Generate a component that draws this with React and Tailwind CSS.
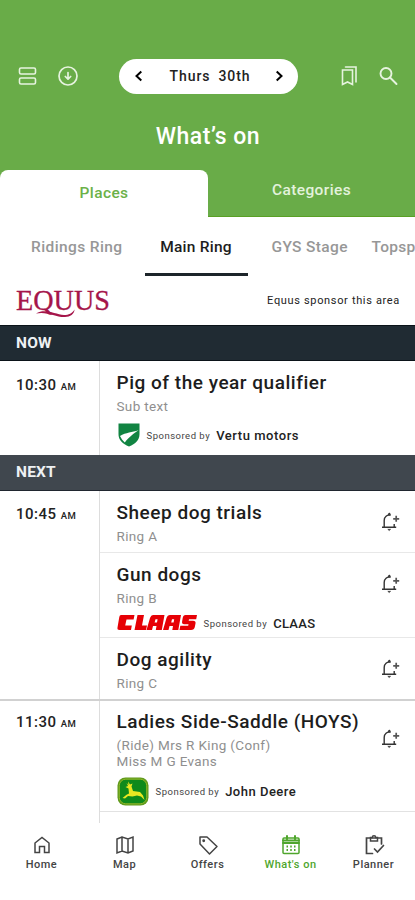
import React from "react";

const stroke = {
  fill: "none",
  stroke: "currentColor",
  strokeWidth: 2,
  strokeLinecap: "round",
  strokeLinejoin: "round",
};

function BellPlus() {
  return (
    <svg className="h-5 w-5 shrink-0 text-[#333]" viewBox="0 0 20 20" {...stroke} strokeWidth="1.4" strokeLinecap="butt">
      <path d="M10.6 3.4C7 2.4 4.2 5 4.2 8.400V15M2 15.300H16.200M14.200 15V12M8.200 2.700L9.300 1.400L10.400 2.700" />
      <path d="M7.800 17.300H10.600L9.200 18.600Z" fill="currentColor" strokeWidth="0.600" />
      <path d="M16.200 3.800V9.800M13.200 6.800H19.200" strokeWidth="1.700" className="text-[#555]" stroke="currentColor" />
    </svg>
  );
}

function ShieldLogo() {
  return (
    <svg className="ml-px h-6 w-[22px]" viewBox="0 0 22 24">
      <path d="M0.500 0.500H21.500V11C21.500 17 17.500 21 11 23.500C4.500 21 0.500 17 0.500 11Z" fill="#118442" />
      <path d="M2 13C8 9.500 14 9.300 20.500 7.300C15.500 10.800 11.500 13.500 6.800 19.500L4 16.500Z" fill="#fff" />
    </svg>
  );
}

function ClaasLogo() {
  return (
    <svg className="h-[15px] w-20" viewBox="0 0 80 15" fill="#e60005">
      <path d="M4 0H17.500L16.600 4.500H9.500L8.200 10.500H14.800L14 15H2.500Q0 15 0.500 12.500L2.300 2Q2.600 0 4 0Z" />
      <path d="M20.500 0H27L25 10.500H30L29 15H17.500Z" />
      <path fillRule="evenodd" d="M36 0H47.500L44.800 15H38.800L39.500 11H36L35 15H29.500L33 3Q34 0 36 0ZM38.500 4.300L37.600 7.500H40L40.600 4.300Z" />
      <path fillRule="evenodd" d="M53 0H64L61.300 15H55.300L56 11H52.500L51.500 15H46L49.500 3Q50.500 0 53 0ZM55 4.300L54.200 7.500H56.600L57.200 4.300Z" />
      <path d="M68.500 0H80L79.200 4.200H72L71.700 5.800H76Q79 5.800 78.500 8.500L77.800 12Q77.200 15 74 15H62.500L63.300 10.800H71.200L71.500 9.200H67.200Q64.600 9.200 65.100 6.500L65.700 3Q66.200 0 68.500 0Z" />
    </svg>
  );
}

function DeerLogo() {
  return (
    <svg className="h-[29px] w-8" viewBox="0 0 32 29">
      <rect x="0.500" y="0.500" width="31" height="28" rx="8" fill="#5f9a1c" />
      <rect x="2.300" y="2.200" width="27.400" height="24.600" rx="6.500" fill="#0f8a1b" stroke="#9dbb2a" strokeWidth="0.900" />
      <path d="M9.500 6L11.500 8L11 4.500L13 7.500L15.500 6.500L14.500 9.500L16 14L23 15L26 18.500L27.500 23L24 19.500L20 18.500L15.500 19.500L11 19L8 21.500L5.500 21L9.500 17.800L12 16.500L11.500 11.500L8.500 10L11 9Z" fill="#e9e722" />
    </svg>
  );
}

function EquusLogo() {
  return (
    <svg className="text-[#a5154a]" width="110" height="36" viewBox="0 0 110 36">
      <text x="0" y="26.500" fontFamily="'Liberation Serif', serif" fontSize="30" fill="currentColor" stroke="currentColor" strokeWidth="0.300" textLength="94" lengthAdjust="spacingAndGlyphs">EQUUS</text>
      <path d="M20 30.500C29 25 39 31.500 48 32C53 32 56 30.500 58.500 26.500C58.500 31 54 34 49 34C40 34.500 31 28 20 30.500Z" fill="currentColor" />
    </svg>
  );
}

function Time({ value, top }) {
  return (
    <div className={"w-[99px] shrink-0 pl-4 text-[15px] leading-[18px] font-medium tracking-[0.5px] text-[#222] " + top}>
      {value} <span className="text-[9.5px] tracking-[0.3px]">AM</span>
    </div>
  );
}

function Sponsor({ logo, name, spacing }) {
  return (
    <div className="flex items-center whitespace-nowrap">
      {logo}
      <span className="ml-[7px] pt-[3px] text-[9.5px] tracking-[0.5px] text-[#444]">Sponsored by</span>
      <span className={"ml-[6px] pt-[2px] text-[13px] font-medium text-[#222] " + spacing}>{name}</span>
    </div>
  );
}

function Event({ title, children, className, bell, bellTop, top = "pt-3" }) {
  return (
    <div className={"flex justify-between pl-[16.5px] pr-[15px] " + className}>
      <div className={"min-w-0 " + top}>
        <h2 className="whitespace-nowrap text-[19px] leading-5 font-medium tracking-[0.52px] text-[#1d1d1d]">{title}</h2>
        {children}
      </div>
      {bell && <div className={bellTop}><BellPlus /></div>}
    </div>
  );
}

function Sub({ children }) {
  return <p className="mt-[5px] text-[13.5px] leading-4 tracking-[0.35px] text-[#8f8f8f]">{children}</p>;
}

function NavItem({ label, active, children }) {
  return (
    <div className={"flex w-[83px] flex-col items-center " + (active ? "text-[#4fa62d]" : "text-[#444]")}>
      <svg className="h-[22px] w-[22px]" viewBox="0 0 22 22" {...stroke} strokeWidth="1.5" strokeLinejoin="miter">{children}</svg>
      <span className="mt-[2px] text-[11px] leading-[13px] font-medium tracking-[0.5px]">{label}</span>
    </div>
  );
}

export default function App() {
  return (
    <div className="flex h-[900px] w-[415px] flex-col overflow-hidden bg-white font-['Roboto',sans-serif]">
      <header className="flex h-[217px] shrink-0 flex-col border-b border-[#5aa025] bg-[#69ac48]">
        <div className="mt-[58px] flex h-[36px] items-center pl-[17px] pr-4 text-[#e6f3df]">
          <svg width="20" height="20" viewBox="0 0 20 20" {...stroke} strokeWidth="1.6">
            <rect x="2.500" y="2" width="16" height="6" rx="1.5" />
            <rect x="2.500" y="12" width="16" height="6" rx="1.5" />
          </svg>
          <svg className="ml-5" width="22" height="22" viewBox="0 0 22 22" {...stroke} strokeWidth="1.7">
            <circle cx="11" cy="11" r="9" />
            <path d="M11 7.500V14M8.300 11.500L11 14.200L13.700 11.500" />
          </svg>
          <div className="ml-10 flex h-[35px] w-[179px] items-center justify-between rounded-full bg-white px-[14px] text-black">
            <svg width="12" height="12" viewBox="0 0 12 12" {...stroke} strokeLinecap="butt" strokeLinejoin="miter"><path d="M8.300 1.500L3.500 6L8.300 10.500" /></svg>
            <span className="ml-[3px] text-[14px] font-medium tracking-[0.95px] [word-spacing:3.5px] text-[#222]">Thurs 30th</span>
            <svg width="12" height="12" viewBox="0 0 12 12" {...stroke} strokeLinecap="butt" strokeLinejoin="miter"><path d="M4.700 1.500L9.500 6L4.700 10.500" /></svg>
          </div>
          <svg className="ml-[41px]" width="22" height="22" viewBox="0 0 22 22" {...stroke} strokeWidth="1.6" strokeLinejoin="miter">
            <path d="M3.500 5H13.500V19.500L8.500 17L3.500 19.500ZM6.500 2H17V17" />
          </svg>
          <svg className="ml-[17px]" width="20" height="20" viewBox="0 0 20 20" {...stroke} strokeWidth="1.9">
            <circle cx="8" cy="7.500" r="5.500" />
            <path d="M12 11.500L18.500 18" />
          </svg>
        </div>
        <h1 className="mt-[29px] pl-px text-center text-[23px] leading-7 font-medium tracking-[0.5px] text-white">What’s on</h1>
        <div className="mt-auto -mb-px flex h-[47px] text-[15.5px] font-medium">
          <div className="flex w-[208px] items-center justify-center rounded-t-lg bg-white tracking-[0.4px] text-[#6bb148]">Places</div>
          <div className="flex w-[207px] justify-center pt-[9px] tracking-[0.4px] text-[#e3f2dc]">Categories</div>
        </div>
      </header>

      <nav className="flex h-[59px] shrink-0 overflow-hidden whitespace-nowrap pl-[31px] pt-[19px] text-[15.5px] leading-[22px] font-medium text-[#979797]">
        <span className="w-[114px] shrink-0 tracking-[0.4px]">Ridings Ring</span>
        <span className="h-[40px] w-[103px] shrink-0 border-b-3 border-[#1d252a] pr-px text-center tracking-[0.25px] text-[#1d1d1d]">Main Ring</span>
        <span className="ml-[23.5px] w-[100px] shrink-0 tracking-[0.35px]">GYS Stage</span>
        <span className="shrink-0 tracking-[0.3px]">Topsp</span>
      </nav>

      <div className="flex h-[49px] shrink-0 items-center justify-between pl-4 pr-[15px]">
        <EquusLogo />
        <span className="pt-px text-[11px] tracking-[0.66px] text-[#222]">Equus sponsor this area</span>
      </div>

      <div className="flex h-9 shrink-0 items-center border-y border-[#0b1319] bg-[#202b33] pt-px pl-4 text-[15.5px] font-bold tracking-[0.2px] text-[#eef1f3]">NOW</div>
      <section className="flex h-[94px] shrink-0">
        <Time value="10:30" top="pt-[14.5px]" />
        <Event title="Pig of the year qualifier" className="grow border-l border-[#ddd]">
          <Sub>Sub text</Sub>
          <div className="mt-[9px]"><Sponsor logo={<ShieldLogo />} name="Vertu motors" spacing="tracking-[0.55px]" /></div>
        </Event>
      </section>

      <div className="flex h-9 shrink-0 items-center border-b border-[#20262f] bg-[#40474e] pt-px pl-4 text-[15.5px] font-bold tracking-[0.2px] text-[#eef1f3]">NEXT</div>
      <section className="flex h-[210px] shrink-0 border-b-2 border-[#d1d1d1]">
        <Time value="10:45" top="pt-[14px]" />
        <div className="flex grow flex-col border-l border-[#ddd]">
          <Event title="Sheep dog trials" className="h-[62px] border-b border-[#e8e8e8]" bell bellTop="pt-[21px]"><Sub>Ring A</Sub></Event>
          <Event title="Gun dogs" className="h-[85px] border-b border-[#e8e8e8]" bell bellTop="pt-[21px]">
            <Sub>Ring B</Sub>
            <div className="mt-[6px]"><Sponsor logo={<ClaasLogo />} name="CLAAS" spacing="tracking-[0.3px]" /></div>
          </Event>
          <Event title="Dog agility" className="h-[61px]" bell bellTop="pt-[21px]"><Sub>Ring C</Sub></Event>
        </div>
      </section>
      <section className="flex h-[122px] shrink-0">
        <Time value="11:30" top="pt-[12px]" />
        <div className="grow border-l border-[#ddd]">
          <Event title="Ladies Side-Saddle (HOYS)" top="pt-[10.5px]" className="h-[111px] border-b border-[#e2e2e2]" bell bellTop="pt-[28px]">
            <Sub>(Ride) Mrs R King (Conf)<br />Miss M G Evans</Sub>
            <div className="mt-[8px]"><Sponsor logo={<DeerLogo />} name="John Deere" spacing="tracking-[0.5px]" /></div>
          </Event>
        </div>
      </section>

      <footer className="flex h-[77px] shrink-0 pt-[11px]">
        <NavItem label="Home"><path d="M4 9L11 3.500L18 9V18.500H13.500V12.500H8.500V18.500H4Z" /></NavItem>
        <NavItem label="Map"><path d="M3 5L8 3L14 5L19 3V17L14 19L8 17L3 19ZM8 3V17M14 5V19" /></NavItem>
        <NavItem label="Offers">
          <path d="M3 3H10L20 12.500L12.500 20L3 10Z" strokeLinejoin="round" />
          <circle cx="6.700" cy="6.700" r="0.700" />
        </NavItem>
        <NavItem label="What's on" active>
          <rect x="3" y="4" width="16" height="15.500" rx="1" />
          <path d="M3 6.500H19M3 9H19M7 2V5M15 2V5" strokeWidth="2" />
          <path d="M6.500 12.500H15.500M6.500 16H15.500" strokeWidth="2" strokeDasharray="1.500 2.250" strokeLinecap="butt" />
        </NavItem>
        <NavItem label="Planner">
          <path d="M18.500 10V4H3.500V19.500H9.500M11.500 15L14.500 18L20.500 11.500" strokeWidth="1.700" />
          <path d="M7.500 3.500H9.300A1.700 1.700 0 0 1 12.700 3.500H14.500V7H7.500Z" />
        </NavItem>
      </footer>
    </div>
  );
}
